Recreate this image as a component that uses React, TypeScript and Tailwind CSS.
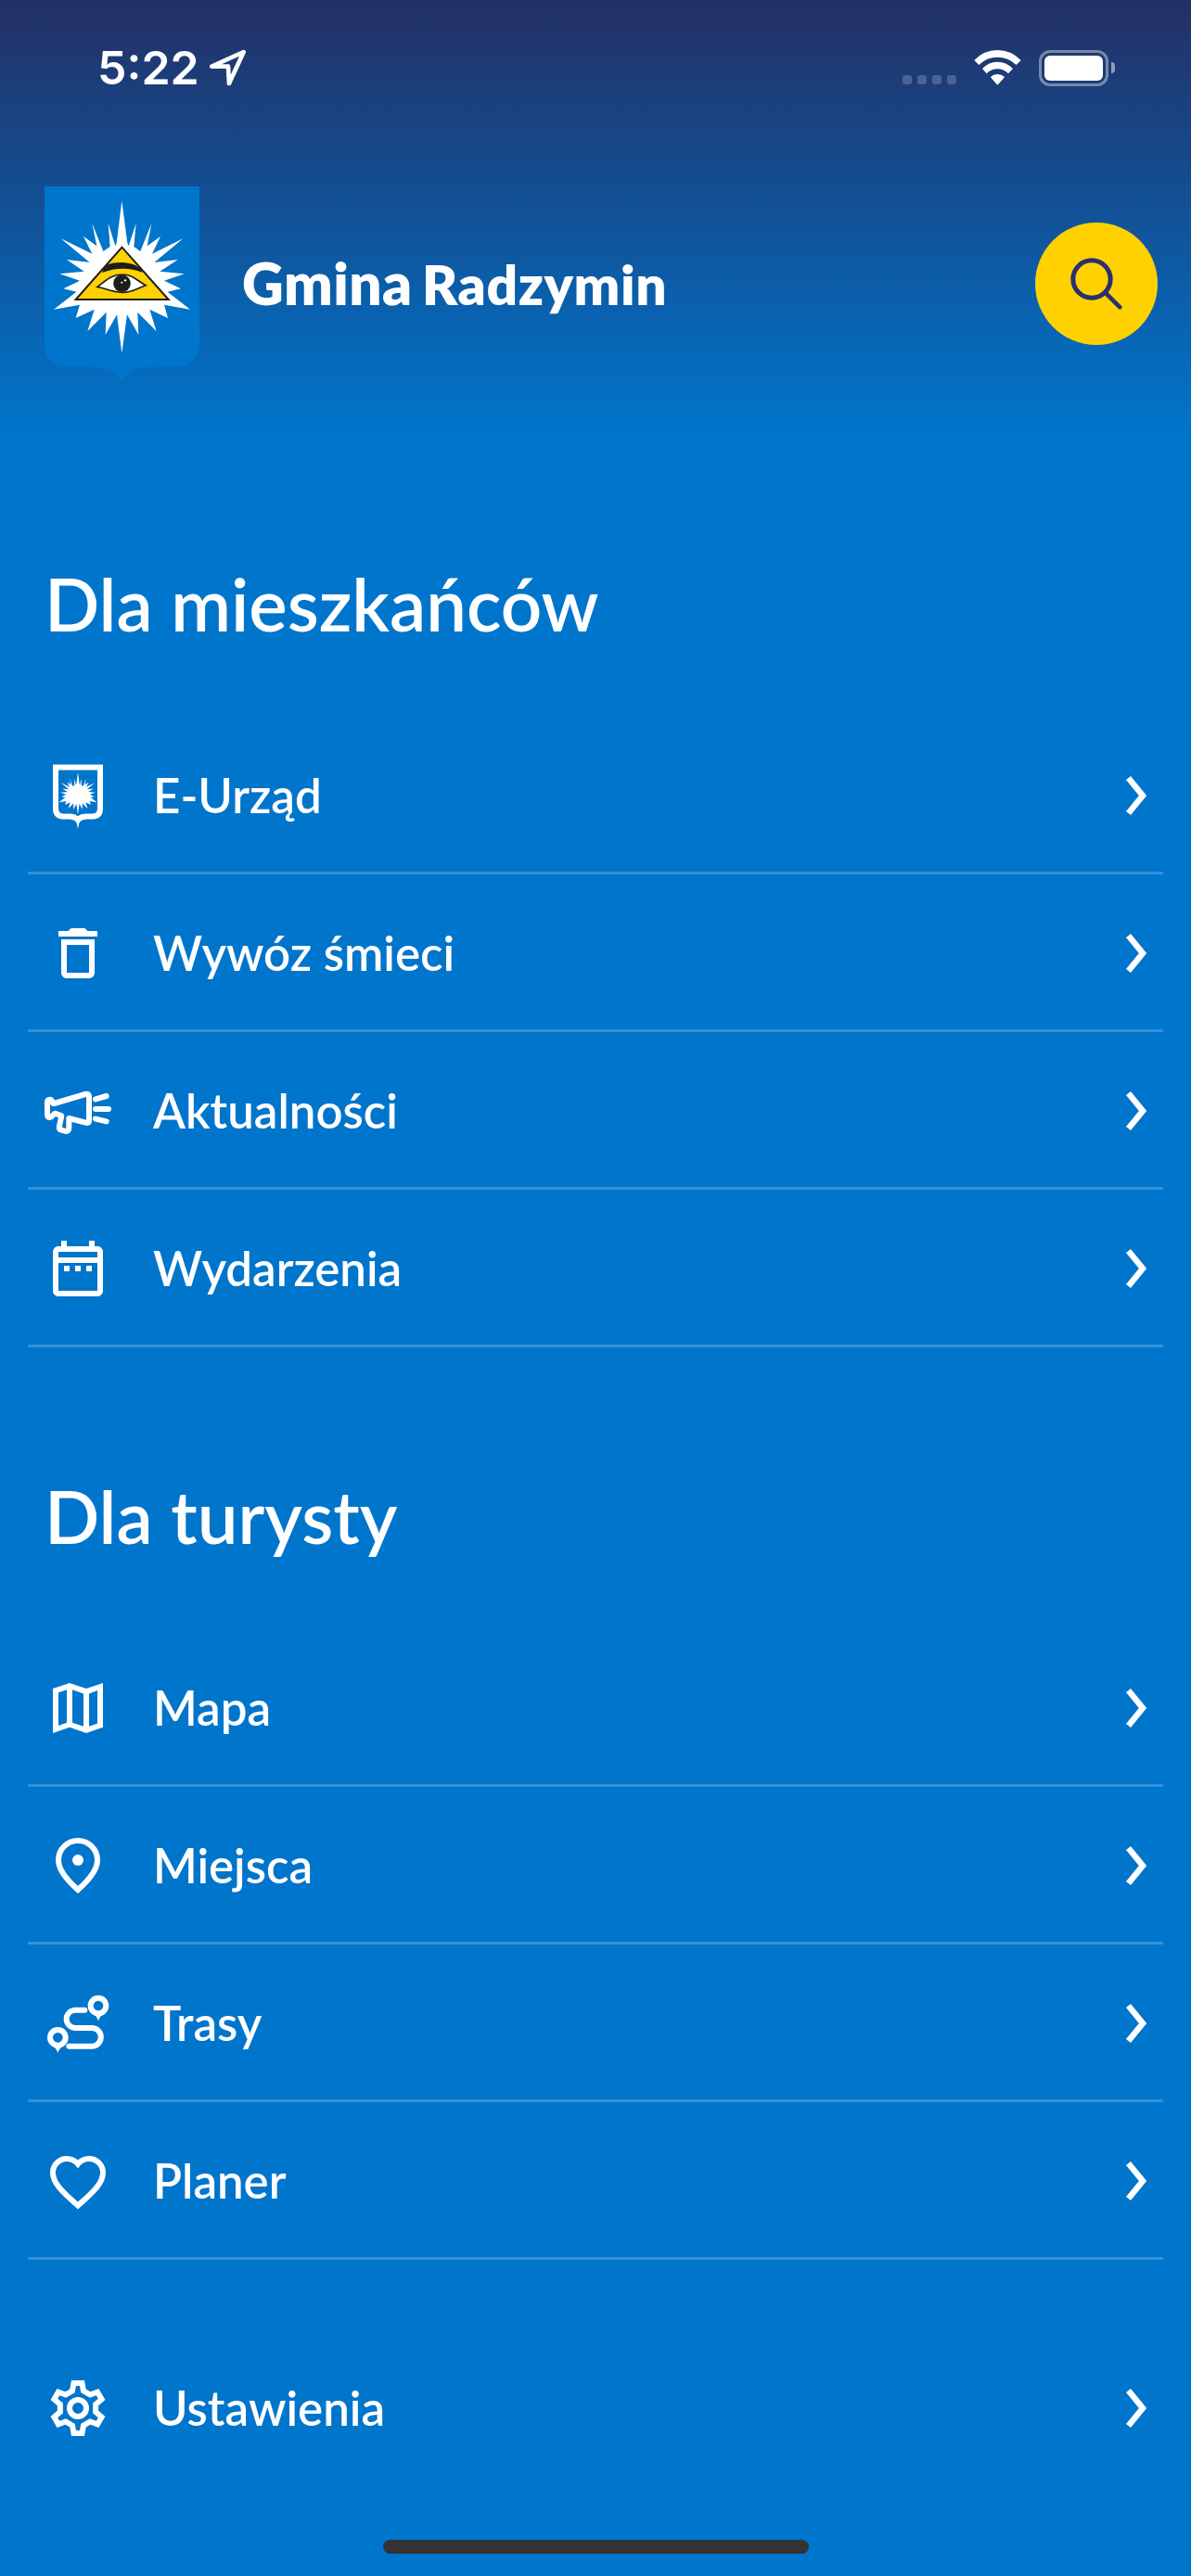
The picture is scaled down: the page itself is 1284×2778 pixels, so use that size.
import type { ReactNode } from 'react';

const BURST =
  '304,110 322,246 326,256 350,182 343,258 364,273 400,183 386,256 429,225 402,281 502,232 409,309 485,300 427,338 506,346 441,368 495,394 452,404 525,461 441,446 453,489 394,461 416,532 355,470 358,543 321,478 304,602 288,478 251,543 254,470 193,532 215,461 155,489 168,446 84,461 157,404 115,394 168,368 103,346 182,338 126,300 200,309 107,232 208,281 180,225 223,256 208,183 244,273 266,258 260,182 283,256 287,246';

function Crest() {
  return (
    <svg className="mt-px h-[211px] w-[167px]" viewBox="54 63 501 633">
      <path
        fill="#0075cc"
        d="M54 63H555V581C555 618 520 645 484 645L384 648C345 650 318 668 304 692C290 668 264 650 225 648L125 645C89 645 54 618 54 581Z"
      />
      <polygon points={BURST} fill="#fff" />
      <path d="M304.500 260L155 429H455Z" fill="#ffd100" stroke="#1d1d1b" strokeWidth="6" />
      <path d="M259 316C285 306 325 306 352 320L366 330L370 341C330 325 285 325 240 342L246 328Z" fill="#1d1d1b" />
      <path
        d="M225 388C250 370 270 348 305 348C340 348 358 372 381 383C355 392 340 406 306 406C270 406 250 392 225 388Z"
        fill="#fff"
        stroke="#1d1d1b"
        strokeWidth="5"
      />
      <circle cx="304.500" cy="377" r="28" fill="#1d1d1b" />
      <circle cx="315" cy="367" r="3.500" fill="#fff" />
      <circle cx="304" cy="374" r="3" fill="#fff" />
    </svg>
  );
}

function Glyph({ children, box = '0 0 24 24' }: { children: ReactNode; box?: string }) {
  return (
    <svg className="h-[72px] w-[72px] shrink-0" viewBox={box} fill="none">
      {children}
    </svg>
  );
}

const shieldIcon = (
  <Glyph box="0 0 72 72">
    <path
      d="M12 5.500H60V50Q60 58 52 58.500H45C40 58.500 38 60 36 62C34 60 32 58.500 27 58.500H20Q12 58 12 50Z"
      stroke="#fff"
      strokeWidth="6"
    />
    <path d="M31 59Q35 64 36 72Q37 64 41 59Z" fill="#fff" />
    <polygon points={BURST} fill="#fff" transform="translate(7.700 .5) scale(.093)" />
  </Glyph>
);

const trashIcon = (
  <Glyph>
    <path
      fill="#fff"
      fillRule="evenodd"
      d="M6 7h12v12c0 1.100-.9 2-2 2H8c-1.100 0-2-.9-2-2zM8 9v10h8V9zM15.500 4l-1-1h-5l-1 1H5v2h14V4z"
    />
  </Glyph>
);

const megaphoneIcon = (
  <Glyph box="84 606 216 216">
    <g stroke="#fff" strokeWidth="18" strokeLinecap="round" strokeLinejoin="round">
      <path d="M115 690L216 660Q228 657 228 667V746Q228 755 217 752L163 738V768Q163 781 152 780L139 776Q129 774 132 763L139 730L119 722C112 722 110 735 102 735Q93 735 93 725V686Q93 677 102 677C110 677 108 691 115 690Z" />
      <path d="M249 676L284 666M249 708H291M249 740L284 748" />
    </g>
  </Glyph>
);

const calendarIcon = (
  <Glyph>
    <path
      fill="#fff"
      fillRule="evenodd"
      d="M21 6v14c0 1.100-.9 2-2 2H5c-1.100 0-2-.9-2-2V6c0-1.100.9-2 2-2h1V2h2v2h8V2h2v2h1c1.100 0 2 .9 2 2zM5 8h14V6H5zM5 20h14V10H5z"
    />
    <path fill="#fff" d="M7 11h2v2H7zM11 11h2v2h-2zM15 11h2v2h-2z" />
  </Glyph>
);

const mapIcon = (
  <Glyph>
    <path
      fill="#fff"
      fillRule="evenodd"
      d="M3 5L9 3L15 5L21 3V18.900L15 21L9 18.900L3 21ZM5 6.450V18.300L8 17.250V5.450ZM10 5.450V17.250L14 18.600V6.850ZM16 6.850V18.600L19 17.550V5.700Z"
    />
  </Glyph>
);

const pinIcon = (
  <Glyph>
    <path d="M12 20.650C7.300 16.500 5 13 5 10a7 7 0 0 1 14 0c0 3-2.300 6.500-7 10.650z" stroke="#fff" strokeWidth="2" />
    <circle cx="12" cy="10" r="2" fill="#fff" />
  </Glyph>
);

const routeIcon = (
  <Glyph box="84 648 216 216">
    <g stroke="#fff" strokeWidth="18">
      <circle cx="258" cy="699" r="25" />
      <circle cx="127" cy="802" r="25" />
      <path d="M214 713H184a29 29 0 0 0 0 58H237a29.500 29.500 0 0 1 0 59H163" strokeLinecap="round" />
    </g>
    <path d="M242 727Q252 732 258 748Q264 732 274 727ZM111 830Q121 835 127 851Q133 835 143 830Z" fill="#fff" />
  </Glyph>
);

const heartIcon = (
  <Glyph>
    <path
      d="M12 20.850C5.800 15.500 3 12.500 3 9a5 5 0 0 1 5-5c1.600 0 3 .7 4 1.900C13 4.700 14.400 4 16 4a5 5 0 0 1 5 5c0 3.500-2.800 6.500-9 11.850z"
      stroke="#fff"
      strokeWidth="2"
    />
  </Glyph>
);

const gearPoints = Array.from({ length: 6 }, (_, i) =>
  [
    [58.8, -17.8],
    [82, -9.5],
    [82, 9.5],
    [58.8, 17.8],
  ]
    .map(([r, deg]) => {
      const a = ((deg + i * 60) * Math.PI) / 180;
      return `${(r * Math.sin(a)).toFixed(2)},${(-r * Math.cos(a)).toFixed(2)}`;
    })
    .join(' '),
).join(' ');

const gearIcon = (
  <Glyph box="-108 -108 216 216">
    <polygon points={gearPoints} stroke="#fff" strokeWidth="18" />
    <circle r="27" stroke="#fff" strokeWidth="18" />
  </Glyph>
);

function Row({ icon, label, divider = true }: { icon: ReactNode; label: string; divider?: boolean }) {
  return (
    <a
      className={
        'mx-[30px] flex h-[170px] items-center border-b-[3px] pt-[3px] pr-[17px] pl-[18px] ' +
        (divider ? 'border-[#3391d6]' : 'border-transparent')
      }
    >
      {icon}
      <span className="ml-[45px] flex-1 text-[51px] leading-[60px] font-semibold text-white">{label}</span>
      <svg className="h-[44px] w-[24px]" viewBox="0 0 24 44" fill="none">
        <path d="M3.500 3L19 22L3.500 41" stroke="#fff" strokeWidth="6.500" />
      </svg>
    </a>
  );
}

function Heading({ children }: { children: ReactNode }) {
  return (
    <h2 className="flex h-[304px] items-center pt-[60px] pl-[48px] text-[78px] leading-[94px] font-semibold text-white">
      {children}
    </h2>
  );
}

function StatusBar() {
  return (
    <div className="flex h-[146px] items-center pl-[105px] text-white">
      <span className="w-[111px] font-[Inter,sans-serif] text-[50px] leading-none font-semibold">5:22</span>
      <svg className="ml-[9px] h-[42px] w-[42px]" viewBox="675 157 126 126" fill="none">
        <path d="M788 169L685 216H738L741 271Z" stroke="#fff" strokeWidth="14" strokeLinejoin="round" />
      </svg>
      <div className="mt-[26px] ml-auto flex gap-[6px]">
        <i className="h-[10px] w-[10px] rounded-[3px] bg-white/20" />
        <i className="h-[10px] w-[10px] rounded-[3px] bg-white/20" />
        <i className="h-[10px] w-[10px] rounded-[3px] bg-white/20" />
        <i className="h-[10px] w-[10px] rounded-[3px] bg-white/20" />
      </div>
      <svg className="ml-[19px] h-[38px] w-[51px]" viewBox="330 101 153 114" fill="#fff">
        <path d="M331 134Q362 101 406 101Q450 101 482 134L467 149Q441 124 406 124Q371 124 346 149Z" />
        <path d="M357 161Q378 139 406 139Q434 139 456 161L441 177Q426 162 406 162Q386 162 371 177Z" />
        <path d="M384 188Q393 179 406 179Q419 179 429 188Q429 190 406 214Q384 190 384 188Z" />
      </svg>
      <div className="ml-[19px] h-[39px] w-[75px] rounded-[12px] border-[3px] border-white/40 p-[3px]">
        <div className="h-full rounded-[6px] bg-white" />
      </div>
      <div className="mr-[82px] ml-[3px] h-[12px] w-[4px] rounded-r-full bg-white/50" />
    </div>
  );
}

export default function App() {
  return (
    <main className="flex h-[2778px] w-[1284px] flex-col overflow-hidden bg-[#0075cc] font-[Lato,sans-serif]">
      <header className="h-[469px] bg-linear-to-b/srgb from-[#233065] to-[#0075cc]">
        <StatusBar />
        <div className="flex h-[320px] items-center pr-[36px] pl-[48px]">
          <Crest />
          <h1 className="ml-[46px] flex items-baseline pb-px font-extrabold text-white">
            <span className="w-[194px] text-[62px] leading-[72px] tracking-[0.5px]">Gmina</span>
            <span className="text-[58.5px] leading-[72px] tracking-[0.6px]">Radzymin</span>
          </h1>
          <button className="ml-auto flex h-[132px] w-[132px] items-center justify-center rounded-full bg-[#ffd100]">
            <svg className="h-[132px] w-[132px]" viewBox="108 90 396 396" fill="none" stroke="#2b2e6f">
              <circle cx="291" cy="273" r="60.500" strokeWidth="15" />
              <path d="M337 319L382 364" strokeWidth="14" strokeLinecap="round" />
            </svg>
          </button>
        </div>
      </header>
      <section>
        <Heading>Dla mieszkańców</Heading>
        <Row icon={shieldIcon} label="E-Urząd" />
        <Row icon={trashIcon} label="Wywóz śmieci" />
        <Row icon={megaphoneIcon} label="Aktualności" />
        <Row icon={calendarIcon} label="Wydarzenia" />
      </section>
      <section>
        <Heading>Dla turysty</Heading>
        <Row icon={mapIcon} label="Mapa" />
        <Row icon={pinIcon} label="Miejsca" />
        <Row icon={routeIcon} label="Trasy" />
        <Row icon={heartIcon} label="Planer" />
      </section>
      <div className="mt-[75px]">
        <Row icon={gearIcon} label="Ustawienia" divider={false} />
      </div>
      <div className="mt-[57px] ml-[413px] h-[15px] w-[459px] shrink-0 rounded-full bg-[#333]" />
    </main>
  );
}
